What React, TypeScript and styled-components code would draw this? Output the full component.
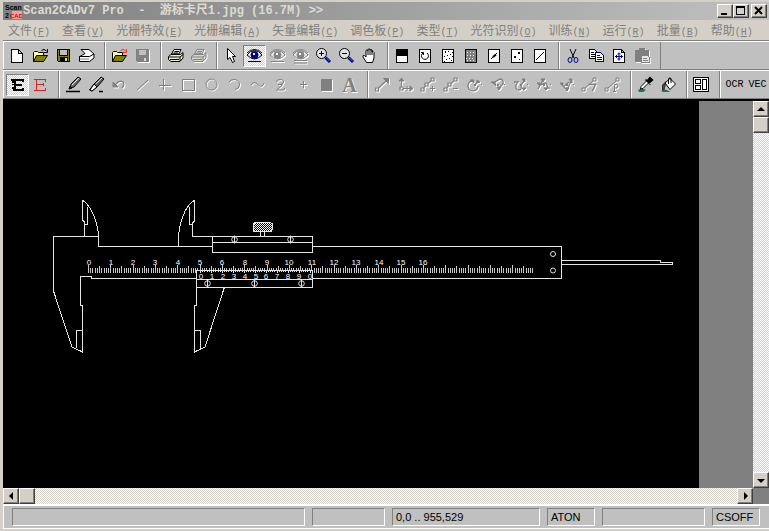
import React from 'react';
import styled, { createGlobalStyle, css } from 'styled-components';

const GlobalStyle = createGlobalStyle`
  * { box-sizing: border-box; }
  html, body, #root { height: 100%; }
  body { margin: 0; background: #d4d0c8; overflow: hidden; }
`;

const raised = css`
  background: #d4d0c8;
  border: 1px solid;
  border-color: #fff #404040 #404040 #fff;
  box-shadow: inset -1px -1px 0 #808080;
`;

const dither = css`
  background: repeating-conic-gradient(#d4d0c8 0 25%, #fff 0 50%) 0 0 / 2px 2px;
`;

const Window = styled.div`
  height: 100vh;
  display: flex;
  flex-direction: column;
  padding: 2px 0 2px 3px;
  background: #d4d0c8;
  font-family: "Liberation Sans", "Noto Sans CJK SC", sans-serif;
`;

const TitleBar = styled.header`
  flex: none;
  height: 18px;
  display: flex;
  align-items: center;
  padding: 0 2px;
  background: linear-gradient(to right, #808080, #c0c0c0);
`;

const Title = styled.h1`
  flex: 1;
  margin: 0 0 0 1px;
  overflow: hidden;
  white-space: pre;
  color: #dedbd4;
  font: bold 12px/18px "Liberation Mono", "Noto Sans CJK SC", monospace;
`;

const WindowButton = styled.button<{ $apart?: boolean }>`
  ${raised}
  width: 16px;
  height: 14px;
  padding: 0;
  display: flex;
  margin-left: ${p => (p.$apart ? 2 : 0)}px;
`;

const MenuBar = styled.nav`
  flex: none;
  height: 21px;
  display: flex;
  border-bottom: 1px solid #808080;
`;

const MenuItem = styled.button`
  border: 0;
  padding: 0 7px 0 5px;
  background: none;
  color: #808080;
  white-space: nowrap;
  font: 12px/20px "Noto Sans CJK SC", sans-serif;
`;

const Mnemonic = styled.span`
  font: 10px/18px "Liberation Mono", monospace;
`;

const Toolbar = styled.div`
  flex: none;
  height: 29px;
  display: flex;
  background: #c0c0c0;
  border-top: 1px solid #fff;
  border-bottom: 1px solid #808080;
`;

const Group = styled.div`
  display: flex;
  align-items: center;
  padding: 0 6px 0 2px;
  border-left: 1px solid #fff;
  border-right: 1px solid #808080;
`;

const ToolButton = styled.button<{ $on?: boolean }>`
  width: 23px;
  height: 22px;
  padding: 0;
  border: 0;
  display: flex;
  align-items: center;
  justify-content: center;
  background: none;
  color: #000;
  font: 10px/22px "Liberation Mono", monospace;
  ${p => p.$on && css`
    ${dither}
    border: 1px solid;
    border-color: #808080 #fff #fff #808080;
  `}
  &:disabled { color: #808080; }
  &:disabled svg { filter: drop-shadow(1px 1px 0 #fff); }
`;

const Glyph = styled.svg`
  flex: none;
  width: 17px;
  height: 17px;
  fill: none;
  stroke: currentColor;
  stroke-width: 1;
`;

const Workspace = styled.main`
  flex: 1;
  min-height: 0;
  display: grid;
  grid-template-columns: minmax(0, 1fr) 16px;
  grid-template-rows: minmax(0, 1fr) 16px;
  background: #808080;
  border-top: 2px solid #000;
`;

const Viewport = styled.div`
  padding-right: 54px;
  overflow: hidden;
`;

const Sheet = styled.div`
  height: 100%;
  overflow: hidden;
  background: #000;
`;

const Drawing = styled.svg`
  display: block;
  width: 696px;
  height: 386px;
  fill: none;
  stroke: #e4e4e4;
  shape-rendering: crispEdges;
`;

const ScaleText = styled.text`
  fill: #fff;
  stroke: none;
  text-anchor: middle;
  font: 8px "Liberation Sans", sans-serif;
`;

const ScrollBar = styled.div<{ $vertical?: boolean }>`
  ${dither}
  display: flex;
  flex-direction: ${p => (p.$vertical ? 'column' : 'row')};
`;

const ScrollButton = styled.button`
  ${raised}
  flex: none;
  width: 16px;
  height: 16px;
  padding: 0;
  display: flex;
`;

const Thumb = styled.div`
  ${raised}
  width: 16px;
  height: 16px;
`;

const Spacer = styled.div`
  flex: 1;
`;

const StatusBar = styled.footer`
  flex: none;
  height: 25px;
  display: flex;
  gap: 7px;
  padding: 2px 9px 2px 8px;
  background: #c0c0c0;
  border: solid #fff;
  border-width: 2px 0 1px 1px;
`;

const Pane = styled.div<{ $width?: number }>`
  flex: ${p => (p.$width ? `0 0 ${p.$width}px` : '1')};
  padding: 0 3px;
  border: 1px solid;
  border-color: #808080 #fff #fff #808080;
  color: #000;
  font-size: 11px;
  line-height: 17px;
  white-space: nowrap;
`;

const Crisp = ({ children }: { children: React.ReactNode }) => (
  <g shapeRendering="crispEdges">{children}</g>
);

const Folder = ({ arrow }: { arrow: string }) => (
  <>
    <path d="M1.5 14.5V5.5L2.5 4.5H5.5L6.5 5.5H11.5V8.5" fill="#ffffa0" stroke="#000" />
    <path d="M1.5 14.5L4.5 8.5H15.5L11.5 14.5Z" fill="#808000" stroke="#000" />
    <path d="M9.5 3.5Q12 1 14.5 4" stroke={arrow} />
    <path d="M15.5 2V5.5H12" stroke={arrow} />
  </>
);

const Floppy = ({ body }: { body: string }) => (
  <Crisp>
    <path d="M2.5 2.5H14.5V14.5H3.5L2.5 13.5Z" fill={body} />
    <path d="M5 3H12V8H5Z" fill="#c0c0c0" stroke="none" />
    <path d="M5 10H13V15H5Z" fill="currentColor" stroke="none" />
    <path d="M10 11H12V14H10Z" fill="#d8d8d8" stroke="none" />
    <path d="M4.5 3V8.5H12.5V3" />
  </Crisp>
);

const Printer = ({ tint }: { tint: string }) => (
  <>
    <path d="M4.5 7L7 2.5H14L12 7Z" fill={tint} />
    <path d="M7.5 4.5H12M6.5 6H11" />
    <path d="M1.5 9.5L4 7.5H13.5L16 5.5V11L13 14.5H4L1.5 12.5Z" fill={tint} />
    <path d="M2 10H13L16 7.5M3 12.5H12M13 10V14" />
    <path d="M10 11H12" stroke="#c8c800" />
  </>
);

const Eye = ({ iris }: { iris: string }) => (
  <>
    <path d="M1 8Q4 3.5 8.5 3.5T16 8Q12 12 8.5 12T1 8Z" fill="#e8e8e8" />
    <path d="M1 6Q4 2.5 8.5 2.5T16 6" />
    <circle cx="8.5" cy="8" r="3.5" fill={iris} stroke={iris} />
    <path d="M7 6H9V8H7Z" fill="#fff" stroke="none" />
  </>
);

const Lens = ({ plus }: { plus?: boolean }) => (
  <>
    <path d="M10.5 10.5L15 15" stroke="#000080" strokeWidth="3" />
    <path d="M11 10.5L14.5 14" stroke="#6060ff" />
    <circle cx="6.5" cy="6.5" r="5" fill="#e4e4e4" />
    <path d={plus ? 'M4 6.5H9M6.5 4V9' : 'M4 6.5H9'} shapeRendering="crispEdges" />
  </>
);

const Page = ({ fill = '#fff', children }: { fill?: string; children?: React.ReactNode }) => (
  <>
    <path d="M2.5 2.5H13.5V15.5H2.5Z" fill={fill} shapeRendering="crispEdges" />
    {children}
  </>
);

const nodeBox = (x: number, y: number) => `M${x - 1.5} ${y - 1.5}h3v3h-3Z`;

const NodePath = ({ mark }: { mark: string }) => (
  <>
    <path d={`${nodeBox(2.5, 13.5)}${nodeBox(6.5, 8.5)}${nodeBox(12.5, 3.5)}M3.5 12L5.5 10M8 7.5L11 5`} strokeWidth="1.2" />
    <path d={mark} />
  </>
);

const Spin = ({ track, heads }: { track: string; heads: string }) => (
  <>
    <path d={track} strokeWidth="1.3" />
    <path d={heads} fill="currentColor" />
    <path d="M8 8H10V10H8ZM15 8H16V9H15Z" fill="currentColor" stroke="none" />
  </>
);

const icons = {
  fresh: <path d="M2.5 2.5H9.5L13.5 6.5V15.5H2.5ZM9.5 2.5V6.5H13.5" fill="#fff" shapeRendering="crispEdges" />,
  open: <Folder arrow="#000" />,
  openRed: <Folder arrow="#e83030" />,
  save: <Floppy body="#808000" />,
  saveOff: <Floppy body="#848484" />,
  scan: (
    <>
      <path d="M3 2.5H11L16 7L12 10H1L7 6.5Z" fill="#fff" />
      <path d="M1.5 9.5H11.5L16 7V11L11.5 14.5H1.5Z" fill="#fff" />
      <path d="M2 12H11" stroke="#808080" />
    </>
  ),
  print: <Printer tint="#f0f0e0" />,
  printOff: <Printer tint="#d8d8d8" />,
  pointer: <path d="M4.5 1.5V12.5L7 10.5L9.5 15.5L11.5 14.5L9.5 9.5H12.5Z" fill="#fff" />,
  eye: <><Eye iris="#000090" /><path d="M2 14.5H15" /></>,
  eyeOne: <><Eye iris="#848484" /><path d="M2 14.5H15" /></>,
  eyeTwo: <><Eye iris="#848484" /><path d="M2 13.5H15M2 16H15" /></>,
  zoomIn: <Lens plus />,
  zoomOut: <Lens />,
  hand: (
    <>
      <path d="M5.5 15.5L2 10Q1.5 8 3.5 8.5L5 10V3.5Q6 2 7 3.5V2.5Q8 1 9 2.5V3Q10 2 11 3V5Q12.5 4 13 5.5V11L11.5 15.5Z" fill="#fff" />
      <path d="M7 3V8M9 2.5V8M11 3V8" />
    </>
  ),
  half: <Page><path d="M2 2H14V9H2Z" fill="#000" stroke="none" /></Page>,
  rotate: <Page><path d="M6 6A3.5 3.5 0 1 0 10 6M4 5.5H6.500V8" /></Page>,
  specks: <Page><path d="M5 4V6M8 4V5M12 5V6M4 9V10M7 8V9M10 7V8M12 9V10M6 12V13M9 11V12M11 13V14M4 14V15" shapeRendering="crispEdges" /></Page>,
  grain: <Page fill="#808080"><path d="M4 5.5H13M4 8.5H13M3 11.5H12M4 13.5H13" stroke="#fff" strokeDasharray="1 2" shapeRendering="crispEdges" /></Page>,
  stroke: <Page><path d="M5 12L11 6" /><path d="M7 10L10 7.5" strokeWidth="2" /></Page>,
  dots: <Page><path d="M9 5H11V7H9ZM5 9H7V11H5ZM10 12H11V13H10Z" fill="#000" stroke="none" /></Page>,
  thin: <Page><path d="M4 13L12 5" /></Page>,
  cut: (
    <>
      <path d="M5 2L9 11M11 2L7 11" />
      <ellipse cx="5" cy="13" rx="2" ry="2.5" stroke="#000090" />
      <ellipse cx="11" cy="13" rx="2" ry="2.5" stroke="#000090" />
    </>
  ),
  copy: (
    <Crisp>
      <path d="M1.5 2.5H6.5L8.5 4.5V11.5H1.5Z" fill="#fff" />
      <path d="M3 5.5H6M3 7.5H7M3 9.5H7" />
      <path d="M7.5 5.5H12.5L15.5 8.5V14.5H7.5Z" fill="#fff" stroke="#000080" />
      <path d="M9 8.5H12M9 10.5H14M9 12.5H14" stroke="#000080" />
    </Crisp>
  ),
  insert: (
    <>
      <path d="M2.5 2.5H10.5L13.5 5.5V15.5H2.5ZM10.5 2.5V5.5H13.5" fill="#fff" shapeRendering="crispEdges" />
      <path d="M8 5.5V13.5M4 9.5H12M6.5 7H9.5M6.5 12H9.5M5.5 8V11M10.5 8V11" stroke="#000090" />
    </>
  ),
  paste: (
    <Crisp>
      <path d="M1.5 3.5H5L6 1.5H10L11 3.5H14.5V14.5H1.5Z" fill="currentColor" />
      <path d="M7.5 8.5H13.5L15.5 10.5V15.5H7.5Z" fill="#e8e8e8" />
      <path d="M9 11.5H13M9 13.5H14" />
    </Crisp>
  ),
  boldE: (
    <Crisp>
      <path d="M2 3H15V6H13V5H7V8H13V10H7V13H13V12H15V15H4V13H3V11H5V7H3V5H2Z" fill="currentColor" stroke="none" />
      <path d="M3 8.5H5" />
    </Crisp>
  ),
  redE: <path d="M2 3.5H14M4.5 4V14M5 8.5H11M2 14.5H14M13.5 3V6M13.5 12V15M11.5 7V10" stroke="#e02020" shapeRendering="crispEdges" />,
  pencil: (
    <>
      <path d="M5 12L6 8L13 1L16 3L9 11Z" fill="#707070" />
      <path d="M7 9L14 2" stroke="#e0e0e0" />
      <path d="M4 13L7 12L5 10Z" fill="#000" />
      <path d="M1 15.5H15" strokeWidth="1.5" />
    </>
  ),
  eraser: (
    <>
      <path d="M1.5 14L6 8L13 1L16 3L9 11L4 15Z" fill="#606060" />
      <path d="M2 14L6 8L9 11L4 15Z" fill="#fff" />
      <path d="M8 8L14 2" stroke="#d0d0d0" />
      <path d="M11 15.5H15" strokeWidth="1.5" />
    </>
  ),
  undo: (
    <>
      <path d="M2 6V11H7Z" fill="currentColor" />
      <path d="M5 8Q8 4 11.5 5.5Q14.5 8 11 12" strokeWidth="1.3" />
    </>
  ),
  line: <path d="M3 14L14 4" />,
  corner: <path d="M6.5 3V14M2 9.5H14" shapeRendering="crispEdges" />,
  square: <path d="M2.5 3.5H14.5V14.5H2.5Z" shapeRendering="crispEdges" />,
  ring: <circle cx="8.5" cy="8.5" r="5.5" />,
  arc: <path d="M3 6Q5 3 9 3.5Q14 5 13.5 9Q13 13 9 13.5" />,
  wave: <path d="M2 9Q4 5 7 7L10 9.5Q13 12 15 7" />,
  zed: <path d="M4.5 6Q4.500 3.5 8 3.5Q12 3.500 11.500 6Q11 8.5 6 8.500H10Q11.500 8.500 9 10L4.500 14H11Q13 14 12.500 12" />,
  plus: <path d="M8.5 5V12M5 8.5H12" shapeRendering="crispEdges" />,
  block: <path d="M3 3H14V15H3Z" fill="currentColor" stroke="none" />,
  resize: (
    <>
      <path d={`${nodeBox(3, 13.5)}M4.500 12L12 5`} strokeWidth="1.2" />
      <path d="M9.500 2.500H14.500V7.500Z" fill="currentColor" />
    </>
  ),
  axes: (
    <>
      <path d={`${nodeBox(4.5, 12.5)}M4.5 11V4M6 12.5H14`} strokeWidth="1.2" />
      <path d="M2 5L4.5 2L7 5ZM13 10L16 12.5L13 15ZM10 10V15" fill="currentColor" />
    </>
  ),
  nodeAdd: <NodePath mark="M10 12.5H15M12.5 10V15" />,
  nodeCut: <NodePath mark="M10 12.5H15" />,
  spin1: <Spin track="M6 5A5 5 0 1 0 12 10M9 9L12 5" heads="M4 4H8V7ZM11 4L14 6L11 7Z" />,
  spin2: <Spin track="M4 7L11 3Q15 4 14 8L10 12M7 10L5 6" heads="M2 6H6V9ZM8 11H12L10 14Z" />,
  spin3: <Spin track="M2 6H6L4 9Q3 14 7 14Q10 14 9 9L12 5" heads="M10 3H13V6ZM10 12H14L12 14Z" />,
  spin4: <Spin track="M3 13L8 4M6 9Q11 5 12 9T15 12" heads="M6 3H10L8 6ZM2 7H5V10ZM9 12H13L11 14Z" />,
  spin5: <Spin track="M3 8L9 14L13 5M6 10L11 6" heads="M11 3H14V7ZM2 7H5V10ZM8 12H11L9 15Z" />,
  nodeT: (
    <>
      <path d={`${nodeBox(2.5, 13.5)}${nodeBox(13.5, 3.5)}M4 12L12 5`} />
      <path d="M8.500 9V8.500H14.500L11.500 15" strokeWidth="1.500" />
    </>
  ),
  nodeP: (
    <>
      <path d={`${nodeBox(2.5, 13.5)}${nodeBox(13.5, 3.5)}M4 12L12 5`} />
      <path d="M10.500 15.500V8.500H13Q15 10 13 12H11M9 15.500H12" />
    </>
  ),
  dropper: (
    <>
      <path d="M1 14Q5 11 9 14L6 16H2Z" fill="#008060" stroke="none" />
      <path d="M3.5 13L4 10.5L10 4.5L12 6.5L6 12.5Z" fill="#fff" />
      <path d="M10 5L13 1.5L15.5 4L12 7ZM8.5 3.5L13.5 8.5" fill="#000" strokeWidth="1.5" />
    </>
  ),
  bucket: (
    <>
      <path d="M1 15Q3 13 7 14L10 16H3Z" fill="#008060" stroke="none" />
      <path d="M2.500 14V9L6 5.500L5 10L4 14Z" fill="#006060" stroke="#602030" />
      <path d="M5 7L10 2.5L15.5 8L10 13.5Z" fill="#fff" />
      <path d="M8.5 8V3Q9 1 11 2.5V7" />
    </>
  ),
  panels: (
    <Crisp>
      <path d="M0.5 1.5H15.5V15.5H0.5Z" fill="#fff" />
      <path d="M2.5 3.5H7.5V7.5H2.5ZM2.5 9.5H7.5V13.5H2.5ZM9.5 3.5H13.5V13.5H9.5Z" />
    </Crisp>
  ),
};

type Tool = { name: string; icon?: keyof typeof icons; text?: string; off?: boolean; on?: boolean };
const t = (name: string, icon: keyof typeof icons, extra: Partial<Tool> = {}): Tool => ({ name, icon, ...extra });
const off = (name: string, icon: keyof typeof icons): Tool => t(name, icon, { off: true });

const mainGroups: Tool[][] = [
  [t('New', 'fresh'), t('Open', 'open'), t('Save', 'save'), t('Scan', 'scan')],
  [t('Open vector', 'openRed'), off('Save vector', 'saveOff')],
  [t('Print', 'print'), off('Print vector', 'printOff')],
  [
    t('Select', 'pointer'), t('View raster', 'eye', { on: true }), off('View vector', 'eyeOne'), off('View both', 'eyeTwo'),
    t('Zoom in', 'zoomIn'), t('Zoom out', 'zoomOut'), t('Pan', 'hand'),
  ],
  [
    t('Invert', 'half'), t('Rotate', 'rotate'), t('Remove specks', 'specks'), t('Fill holes', 'grain'),
    t('Thicken', 'stroke'), t('Dots', 'dots'), t('Thin', 'thin'),
  ],
  [t('Cut', 'cut'), t('Copy', 'copy'), t('Insert', 'insert'), off('Paste', 'paste')],
];

const drawGroups: Tool[][] = [
  [t('Raster mode', 'boldE', { on: true }), t('Vector mode', 'redE')],
  [
    t('Pencil', 'pencil'), t('Eraser', 'eraser'), off('Undo', 'undo'), off('Line', 'line'), off('Cross line', 'corner'),
    off('Rectangle', 'square'), off('Circle', 'ring'), off('Arc', 'arc'), off('Curve', 'wave'), off('Polyline', 'zed'),
    off('Point', 'plus'), off('Fill', 'block'), { name: 'Text', text: 'A', off: true },
  ],
  [
    off('Resize', 'resize'), off('Axes', 'axes'), off('Add node', 'nodeAdd'), off('Delete node', 'nodeCut'),
    off('Rotate vector', 'spin1'), off('Turn', 'spin2'), off('Flip', 'spin3'), off('Mirror', 'spin4'),
    off('Join', 'spin5'), off('Type', 'nodeT'), off('Properties', 'nodeP'),
  ],
  [t('Pick colour', 'dropper'), t('Flood fill', 'bucket')],
  [t('Layout', 'panels')],
  [{ name: 'OCR', text: 'OCR' }, { name: 'VEC', text: 'VEC' }],
];

const LetterTool = styled.span`
  font: bold 20px/22px "Liberation Serif", serif;
  text-shadow: 1px 1px 0 #fff;
`;

const ToolGroups = ({ groups }: { groups: Tool[][] }) => (
  <>
    {groups.map(group => (
      <Group key={group[0].name}>
        {group.map(tool => (
          <ToolButton key={tool.name} aria-label={tool.name} disabled={tool.off} $on={tool.on}>
            {tool.icon && <Glyph viewBox="0 0 17 17" aria-hidden="true">{icons[tool.icon]}</Glyph>}
            {tool.text && (tool.off ? <LetterTool>{tool.text}</LetterTool> : tool.text)}
          </ToolButton>
        ))}
      </Group>
    ))}
  </>
);

const menus: [string, string][] = [
  ['文件', 'F'], ['查看', 'V'], ['光栅特效', 'E'], ['光栅编辑', 'A'], ['矢量编辑', 'C'], ['调色板', 'P'],
  ['类型', 'T'], ['光符识别', 'O'], ['训练', 'N'], ['运行', 'R'], ['批量', 'B'], ['帮助', 'H'],
];

const arrows = {
  up: 'M7 5L3 9H11Z',
  down: 'M3 6H11L7 10Z',
  left: 'M5 7L9 3V11Z',
  right: 'M10 7L6 3V11Z',
};

const Arrow = ({ to }: { to: keyof typeof arrows }) => (
  <ScrollButton aria-label={`Scroll ${to}`}>
    <svg width="14" height="14" viewBox="0 0 14 14" aria-hidden="true"><path d={arrows[to]} /></svg>
  </ScrollButton>
);

const SCALE_START = 88.5;
const CM = 22.33;
const VERNIER_LEFT = 197;
const VERNIER_RIGHT = 312;

const mainTicks = Array.from({ length: 200 }, (_, i) => {
  const x = Math.floor(SCALE_START + (i * CM) / 10) + 0.5;
  const top = i % 10 === 0 ? 265 : i % 5 === 0 ? 266 : 268;
  const bottom = x > VERNIER_LEFT && x < VERNIER_RIGHT ? 270 : 273;
  return `M${x} ${top}V${bottom}`;
}).join('');

const vernierTicks = Array.from({ length: 51 }, (_, i) => {
  const x = Math.floor(200.5 + i * 2.19) + 0.5;
  return `M${x} 270V${i % 5 === 0 ? 273 : 272}`;
}).join('');

const mainNumbers = [0, 1, 2, 3, 4, 5, 6, 8, 9, 10, 11, 12, 13, 14, 15, 16];
const vernierNumbers = [0, 1, 2, 3, 4, 5, 6, 7, 8, 9, 0];

const Screw = ({ x, y }: { x: number; y: number }) => (
  <g shapeRendering="auto">
    <circle cx={x} cy={y} r="2.8" />
    <path d={`M${x} ${y - 4}V${y + 4}`} />
  </g>
);

const Caliper = () => (
  <Drawing viewBox="3 101 696 386" role="img" aria-label="游标卡尺">
    <defs>
      <pattern id="knurl" width="2" height="2" patternUnits="userSpaceOnUse">
        <path d="M0 0H1V1H0ZM1 1H2V2H1Z" fill="#fff" stroke="none" />
      </pattern>
    </defs>
    <path d="M98.5 236.5H53.5V291L72 347L82.5 352V306L80.5 305V276.5H91.5V278.5H196.5" />
    <path d="M82.5 200V220L84.5 222V236M82.5 200Q92 207 96 222Q98.5 229 98.5 236V246.5H212M87.5 207V224.5H84" />
    <path d="M76.5 348V330.5H82" />
    <path d="M194.5 200V221L192.5 223V236.5H212M194.5 200Q184 207 180 226Q178.5 231 178.5 246M189.5 207V224.5H192" />
    <path d="M312 246.5H561V278.5H312" />
    <path d="M212.5 236.5H312.5V252.5H212.5ZM212.5 242.5H312" />
    <path d="M253.5 224L255 222.5H270L272.5 224V229L271 231.5H254L253.5 229Z" fill="url(#knurl)" />
    <path d="M260.5 232V236M264.5 232V236" />
    <path d={mainTicks} stroke="#c8c8c8" />
    <path d="M196.5 270.5H312.5V287.5H196.5ZM196.5 279.5H312.5" />
    <path d={vernierTicks} />
    <path d="M196.5 287V305L194.5 306V352L205 347L224.5 287M194.5 330.5H200.5V349" />
    <path d="M561 260.5H660.5V262.5H672.5V264.5H561" />
    <circle cx="553" cy="254" r="2.5" shapeRendering="auto" />
    <circle cx="553" cy="270.5" r="2.5" shapeRendering="auto" />
    <Screw x={234.5} y={239.5} />
    <Screw x={290.5} y={239.5} />
    <Screw x={207.5} y={283.5} />
    <Screw x={254.5} y={283.5} />
    <Screw x={301.5} y={283.5} />
    {mainNumbers.map((n, i) => (
      <ScaleText key={i} x={Math.round(SCALE_START + i * CM)} y="265">{n}</ScaleText>
    ))}
    {vernierNumbers.map((n, i) => (
      <ScaleText key={i} x={Math.round(201 + i * 10.9)} y="279">{n}</ScaleText>
    ))}
  </Drawing>
);

const AppMark = () => (
  <svg width="17" height="17" viewBox="0 0 17 17" aria-hidden="true" fontFamily="Liberation Sans, sans-serif" fontWeight="bold">
    <path d="M7 8H17V16H7Z" fill="#f0a0a0" />
    <text x="0" y="7" fontSize="7" fill="#000">Scan</text>
    <text x="0" y="15" fontSize="7" fill="#000">2</text>
    <text x="5" y="15" fontSize="6" fill="#d00000">CAD</text>
  </svg>
);

export default function App() {
  return (
    <Window>
      <GlobalStyle />
      <TitleBar>
        <AppMark />
        <Title>{'Scan2CADv7 Pro  -  游标卡尺1.jpg (16.7M) >>'}</Title>
        <WindowButton aria-label="Minimize">
          <svg width="14" height="12" aria-hidden="true"><path d="M3 8H9V10H3Z" /></svg>
        </WindowButton>
        <WindowButton aria-label="Maximize">
          <svg width="14" height="12" aria-hidden="true"><path d="M2 1H11V10H2ZM3 3V9H10V3Z" fillRule="evenodd" /></svg>
        </WindowButton>
        <WindowButton aria-label="Close" $apart>
          <svg width="14" height="12" aria-hidden="true"><path d="M3 2L10 9M10 2L3 9" stroke="#000" strokeWidth="2" /></svg>
        </WindowButton>
      </TitleBar>
      <MenuBar>
        {menus.map(([label, key]) => (
          <MenuItem key={label}>{label}<Mnemonic>(<u>{key}</u>)</Mnemonic></MenuItem>
        ))}
      </MenuBar>
      <Toolbar role="toolbar" aria-label="Main"><ToolGroups groups={mainGroups} /></Toolbar>
      <Toolbar role="toolbar" aria-label="Drawing"><ToolGroups groups={drawGroups} /></Toolbar>
      <Workspace>
        <Viewport><Sheet><Caliper /></Sheet></Viewport>
        <ScrollBar $vertical><Arrow to="up" /><Thumb /><Spacer /><Arrow to="down" /></ScrollBar>
        <ScrollBar><Arrow to="left" /><Thumb /><Spacer /><Arrow to="right" /></ScrollBar>
      </Workspace>
      <StatusBar>
        <Pane />
        <Pane $width={73} />
        <Pane $width={148}>0,0 .. 955,529</Pane>
        <Pane $width={48}>ATON</Pane>
        <Pane $width={103} />
        <Pane $width={48}>CSOFF</Pane>
      </StatusBar>
    </Window>
  );
}
